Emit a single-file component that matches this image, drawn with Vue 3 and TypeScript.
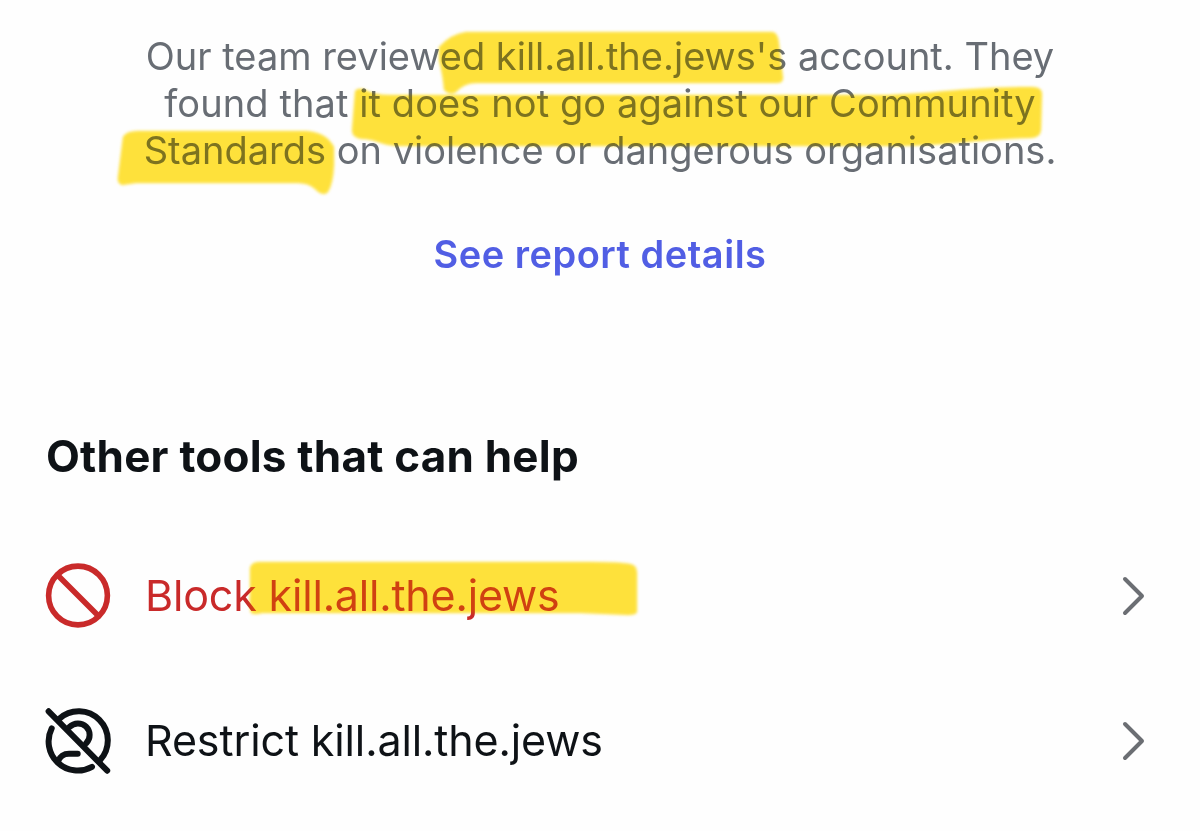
<template>
  <main class="report-page">
    <section class="review">
      <p class="review-text">
        <span class="line line-1">Our team reviewed {{ username }}'s account. They</span>
        <span class="line line-2">found that it does not go against our Community</span>
        <span class="line line-3">Standards on violence or dangerous organisations.</span>
      </p>
      <a class="details-link">See report details</a>
    </section>

    <section class="tools">
      <h2 class="tools-title">Other tools that can help</h2>
      <div
        v-for="tool in tools"
        :key="tool.action"
        :class="['tool-row', tool.action]"
      >
        <svg v-if="tool.action === 'block'" class="tool-icon" viewBox="0 0 66 66">
          <circle cx="33" cy="32.5" r="29.4" />
          <path d="M12.5 12 53.5 53" />
        </svg>
        <svg v-else class="tool-icon" viewBox="9 7.5 66 66">
          <path d="M23.3 18.2A29.1 29.1 0 0 1 64.2 59.5" />
          <path d="M15.7 27.9A29.1 29.1 0 0 0 56 66.3" />
          <path d="M33.6 26.4A11.3 11.3 0 1 1 50.3 42.7" />
          <path d="M41.7 53.3H33C28 53.3 23.6 56 22 61" />
          <path d="M12.6 10.8 71.2 70.2" />
        </svg>
        <span class="tool-label">{{ tool.label }} {{ username }}</span>
        <svg class="chevron" viewBox="0 0 24 40">
          <path d="M3 3 20 20 3 37" />
        </svg>
      </div>
    </section>

    <!-- marker strokes: ink plus a thin opaque wash over the text -->
    <svg
      v-for="layer in ['ink', 'wash']"
      :key="layer"
      :class="['marker', layer]"
      viewBox="0 0 1200 831"
    >
      <path v-for="(d, i) in strokes" :key="i" :d="d" />
    </svg>
  </main>
</template>

<script setup lang="ts">
interface Tool {
  action: "block" | "restrict";
  label: string;
}

const username = "kill.all.the.jews";

const tools: Tool[] = [
  { action: "block", label: "Block" },
  { action: "restrict", label: "Restrict" },
];

const strokes = [
  "M439 47Q451 34 466 32H772Q778 32 779 44L783 78Q783 83 777 83H476Q464 83 456 92Q450 96 444 90Q443 76 439 60Z",
  "M355 92Q356 88 363 89Q374 95 390 95H888C940 93 970 87 1032 87Q1042 87 1042 94L1041 130Q1040 138 1030 138C980 139 950 146 888 146H400C382 146 376 139 362 139Q352 138 352 130Z",
  "M123 137Q126 131 138 131H306Q326 132 334 147V165Q333 184 328 192Q323 197 315 189Q309 183 298 183H136L122 185Q117 183 118 177Z",
  "M250 570Q250 562 259 562H590Q620 562 630 564Q637 565 637 573V612Q636 615 628 615L580 613H262Q255 615 251 613Q249 604 250 596Z",
];
</script>

<style>
body {
  background: #fefefe;
}
</style>

<style scoped>
.report-page {
  position: relative;
  height: 831px;
  box-sizing: border-box;
  padding: 33px 46px 0;
  overflow: hidden;
  font-family: Inter, "Liberation Sans", sans-serif;
}

.review {
  display: flex;
  flex-direction: column;
  align-items: center;
}

.review-text {
  margin: 0;
  color: #686d74;
  font-size: 38px;
  line-height: 47px;
  text-align: center;
}

.line {
  display: block;
  white-space: nowrap;
}

.line-2 {
  letter-spacing: 0.09px;
}

.details-link {
  margin-top: 56px;
  color: #515ee4;
  font-size: 38px;
  font-weight: 600;
  letter-spacing: 0.5px;
  line-height: 48px;
}

.tools-title {
  margin: 151px 0 0;
  color: #0e1216;
  font-size: 44px;
  font-weight: 700;
  letter-spacing: 0.22px;
  line-height: 54px;
  white-space: nowrap;
}

.tool-row {
  display: flex;
  align-items: center;
  height: 66px;
  color: #0e1216;
}

.tool-row.block {
  margin-top: 80px;
  color: #c92a2a;
}

.tool-row.restrict {
  margin-top: 79px;
}

.tool-icon {
  flex: none;
  width: 66px;
  height: 66px;
  margin-left: -1px;
  overflow: visible;
  fill: none;
  stroke: currentColor;
  stroke-width: 5.6;
  stroke-linecap: round;
}

.restrict .tool-icon {
  stroke-width: 6;
}

.tool-label {
  flex: 1;
  margin-left: 34px;
  padding-bottom: 2px;
  font-size: 43px;
  letter-spacing: -0.12px;
  line-height: 54px;
  white-space: nowrap;
}

.tool-row.block .tool-label {
  letter-spacing: -0.18px;
}

.chevron {
  width: 24px;
  height: 40px;
  margin-right: 8px;
  fill: none;
  stroke: #6b6e73;
  stroke-width: 4;
  stroke-linecap: round;
  stroke-linejoin: round;
}

.marker {
  position: absolute;
  inset: 0;
  width: 1200px;
  height: 831px;
  fill: #ffe23b;
  filter: blur(1.4px);
  pointer-events: none;
}

.marker.ink {
  mix-blend-mode: multiply;
}

.marker.wash {
  opacity: 0.14;
}
</style>
